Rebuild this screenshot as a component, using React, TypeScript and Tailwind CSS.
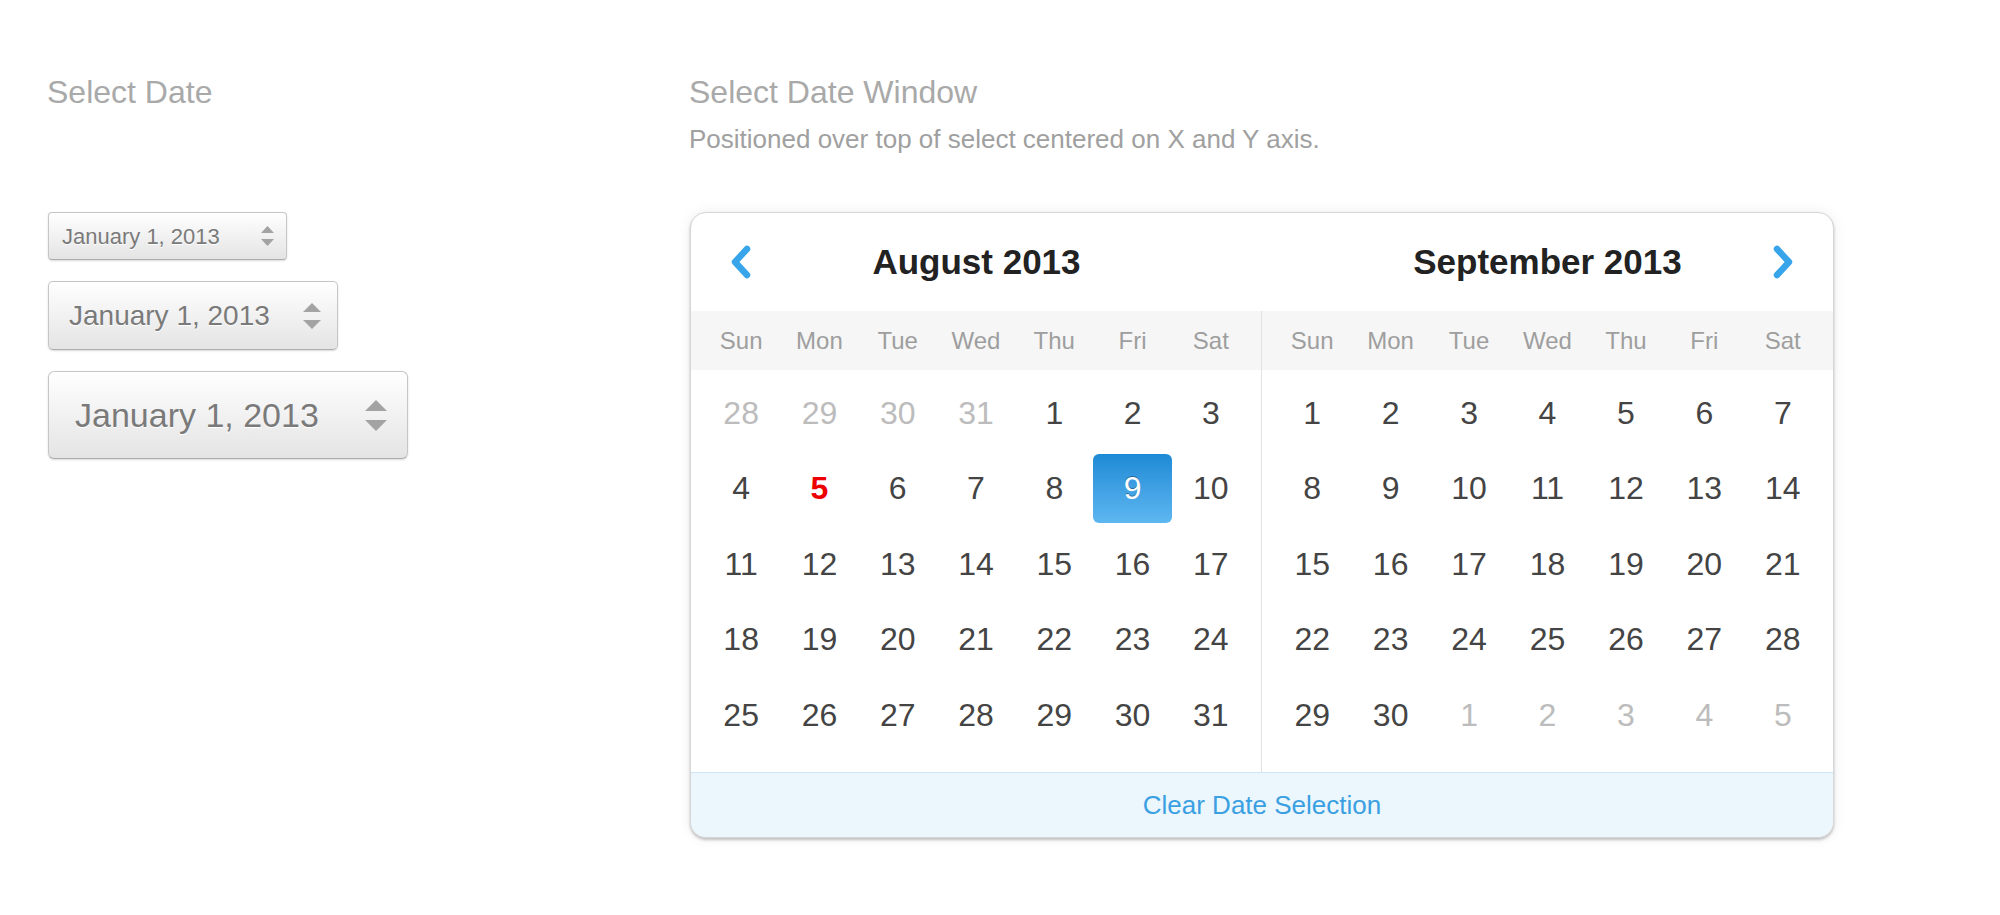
import { clsx } from "clsx";

type Day = { n: number; muted?: boolean; today?: boolean; selected?: boolean };

const WEEKDAYS = ["Sun", "Mon", "Tue", "Wed", "Thu", "Fri", "Sat"];

function buildMonth(lead: number[], count: number, trail: number[]): Day[] {
  const days: Day[] = lead.map((n) => ({ n, muted: true }));
  for (let i = 1; i <= count; i++) days.push({ n: i });
  trail.forEach((n) => days.push({ n, muted: true }));
  return days;
}

const august = buildMonth([28, 29, 30, 31], 31, []).map((d) =>
  !d.muted && d.n === 5 ? { ...d, today: true } : !d.muted && d.n === 9 ? { ...d, selected: true } : d
);
const september = buildMonth([], 30, [1, 2, 3, 4, 5]);

function Chevron({ dir }: { dir: "left" | "right" }) {
  return (
    <svg width="24" height="36" viewBox="0 0 24 36" className="text-[#38a4e9]">
      <polyline
        points={dir === "left" ? "18,5 6,18 18,31" : "6,5 18,18 6,31"}
        fill="none"
        stroke="currentColor"
        strokeWidth="6.5"
        strokeLinecap="round"
        strokeLinejoin="round"
      />
    </svg>
  );
}

function Stepper({ w, h, gap }: { w: number; h: number; gap: number }) {
  const total = h * 2 + gap;
  return (
    <svg width={w} height={total} viewBox={`0 0 ${w} ${total}`} className="shrink-0">
      <polygon points={`0,${h} ${w / 2},0 ${w},${h}`} fill="#a3a3a3" />
      <polygon points={`0,${h + gap} ${w},${h + gap} ${w / 2},${total}`} fill="#a3a3a3" />
    </svg>
  );
}

function SelectBox({ size }: { size: "sm" | "md" | "lg" }) {
  const box = {
    sm: "w-[239px] h-[48px] pl-[13px] pr-[12px] rounded-[4px] text-[22px]",
    md: "w-[290px] h-[69px] pl-[20px] pr-[16px] rounded-[5px] text-[28px]",
    lg: "w-[360px] h-[88px] pl-[26px] pr-[20px] rounded-[6px] text-[34px]",
  }[size];
  const arrow = { sm: [13, 7, 6], md: [18, 9, 8], lg: [22, 11, 9] }[size];
  return (
    <div
      className={clsx(
        "flex items-center justify-between border border-[#c6c6c6] border-b-[#adadad] bg-linear-to-b from-white to-[#e4e4e4] shadow-[0_1px_2px_rgba(0,0,0,0.15)] text-[#7a7a7a] [text-shadow:0_1px_0_#fff]",
        box
      )}
    >
      <span>January 1, 2013</span>
      <Stepper w={arrow[0]} h={arrow[1]} gap={arrow[2]} />
    </div>
  );
}

function MonthPane({ title, days, nav, divider }: { title: string; days: Day[]; nav: "left" | "right"; divider?: boolean }) {
  return (
    <div className="w-[571px] flex flex-col">
      <div className="h-[98px] grid grid-cols-7 items-center px-[11px]">
        <div className="flex justify-center">{nav === "left" && <Chevron dir="left" />}</div>
        <div className="col-span-5 text-center text-[35px] font-bold text-[#222]">{title}</div>
        <div className="flex justify-center">{nav === "right" && <Chevron dir="right" />}</div>
      </div>
      <div className={clsx("flex-1 flex flex-col", divider && "border-r border-[#e2e2e2]")}>
        <div className="h-[59px] bg-[#f6f6f6] grid grid-cols-7 items-center px-[11px]">
          {WEEKDAYS.map((d) => (
            <div key={d} className="text-center text-[24px] text-[#9e9e9e]">
              {d}
            </div>
          ))}
        </div>
        <div className="grid grid-cols-7 gap-y-[6.5px] px-[11px] pt-[8px] pb-[23px]">
          {days.map((d, i) => (
            <div
              key={i}
              className={clsx(
                "h-[69px] flex items-center justify-center text-[32px]",
                d.muted && "text-[#bcbcbc]",
                d.today && "text-[#ee0000] font-bold",
                d.selected &&
                  "rounded-[6px] bg-linear-to-b from-[#1b8ad5] to-[#5db7f1] text-white [text-shadow:0_-1px_0_rgba(0,0,0,0.35)]",
                !d.muted && !d.today && !d.selected && "text-[#444]"
              )}
            >
              {d.n}
            </div>
          ))}
        </div>
      </div>
    </div>
  );
}

export default function App() {
  return (
    <div className="min-h-screen bg-white font-['Liberation_Sans',Arial,sans-serif]">
      <div className="flex pt-[72px] pl-[47px]">
        <div className="w-[642px] shrink-0">
          <div className="h-[140px]">
            <h2 className="text-[32px] leading-[40px] text-[#a9a9a9]">Select Date</h2>
          </div>
          <div className="flex flex-col items-start gap-[21px] pl-px">
            <SelectBox size="sm" />
            <SelectBox size="md" />
            <SelectBox size="lg" />
          </div>
        </div>

        <div>
          <div className="h-[140px]">
            <h2 className="text-[32px] leading-[40px] text-[#a9a9a9]">Select Date Window</h2>
            <p className="mt-3 text-[26px] leading-[30px] text-[#a0a0a0]">
              Positioned over top of select centered on X and Y axis.
            </p>
          </div>
          <div className="ml-px w-[1144px] rounded-[16px] border border-[#d6d6d6] bg-white overflow-hidden shadow-[0_2px_3px_rgba(0,0,0,0.22),0_0_14px_rgba(0,0,0,0.07)]">
            <div className="flex">
              <MonthPane title="August 2013" days={august} nav="left" divider />
              <MonthPane title="September 2013" days={september} nav="right" />
            </div>
            <div className="h-[65px] flex items-center justify-center border-t border-[#cde5f4] bg-[#ebf6fd] text-[26px] text-[#3aa0e2]">
              Clear Date Selection
            </div>
          </div>
        </div>
      </div>
    </div>
  );
}
